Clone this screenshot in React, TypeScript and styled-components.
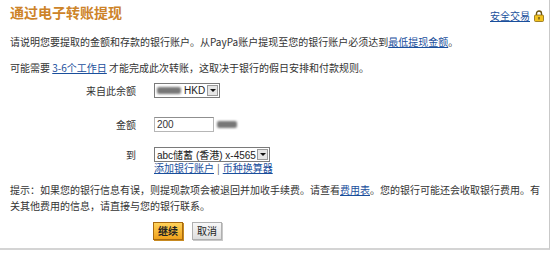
import styled, { createGlobalStyle } from "styled-components"

const GlobalStyle = createGlobalStyle`
  html, body {
    margin: 0;
    padding: 0;
    background: #ffffff;
  }
  body {
    font-family: "Noto Sans CJK SC", "Liberation Sans", sans-serif;
    font-size: 10px;
    color: #333333;
  }
`

const Panel = styled.div`
  width: 550px;
  height: 250px;
  border-right: 1px solid #c9c9c9;
  border-bottom: 2px solid #d4d4d4;
  box-sizing: border-box;
  padding: 3px 5px 0 10px;
`

const Header = styled.div`
  display: flex;
  align-items: flex-start;
  justify-content: space-between;
  height: 28px;
`

const Title = styled.h1`
  margin: 0;
  font-size: 14px;
  line-height: 18px;
  font-weight: 700;
  color: #cd8328;
  font-family: "Noto Sans CJK SC", sans-serif;
`

const Secure = styled.div`
  display: flex;
  align-items: center;
  gap: 4px;
  margin-top: 5px;
  line-height: 15px;
`

const Link = styled.a`
  color: #1a4f9c;
  text-decoration: underline;
  cursor: pointer;
`

const Para = styled.p<{ $mt: number; $lh?: number }>`
  margin: ${(p) => p.$mt}px 4px 0 0;
  line-height: ${(p) => p.$lh ?? 15}px;
  font-size: 10px;
`

const Form = styled.div`
  display: grid;
  grid-template-columns: 126px auto;
  column-gap: 18px;
  margin-top: 8px;
  align-items: start;
`

const Label = styled.div<{ $h: number }>`
  height: ${(p) => p.$h}px;
  line-height: 15px;
  text-align: right;
`

const Field = styled.div<{ $h: number }>`
  height: ${(p) => p.$h}px;
  display: flex;
  align-items: flex-start;
  gap: 3px;
`

const Select = styled.div<{ $w: number }>`
  width: ${(p) => p.$w}px;
  height: 15px;
  border: 1px solid #7a7a7a;
  box-sizing: border-box;
  display: flex;
  align-items: center;
  justify-content: space-between;
  padding-left: 2px;
  font-family: "Liberation Sans", "Noto Sans CJK SC", sans-serif;
  font-size: 10px;
  color: #222;
  background: #fff;
`

const Arrow = styled.span`
  width: 11px;
  height: 11px;
  margin-right: 1px;
  background: #e6e6e6;
  border: 1px solid #9a9a9a;
  box-sizing: border-box;
  display: flex;
  align-items: center;
  justify-content: center;
  &::after {
    content: "";
    border-left: 3px solid transparent;
    border-right: 3px solid transparent;
    border-top: 3px solid #111;
  }
`

const Value = styled.span`
  display: flex;
  align-items: center;
  gap: 3px;
`

const Blur = styled.span<{ $w: number }>`
  display: inline-block;
  width: ${(p) => p.$w}px;
  height: 7px;
  margin-top: 4px;
  background: #777;
  border-radius: 2px;
  filter: blur(1px);
`

const Input = styled.div`
  width: 60px;
  height: 15px;
  box-sizing: border-box;
  border: 1px solid #b6b6b6;
  border-top-color: #8f8f8f;
  padding-left: 2px;
  display: flex;
  align-items: center;
  font-family: "Liberation Sans", sans-serif;
  font-size: 10px;
`

const Links = styled.div`
  display: flex;
  gap: 3px;
  align-items: center;
  height: 12px;
  line-height: 12px;
  color: #555;
`

const Buttons = styled.div`
  display: flex;
  gap: 9px;
  margin: 8px 0 0 143px;
`

const Button = styled.button<{ $primary?: boolean }>`
  height: 18px;
  padding: 0 4px;
  font-family: "Noto Sans CJK SC", sans-serif;
  font-size: 10px;
  font-weight: ${(p) => (p.$primary ? 700 : 400)};
  color: #222;
  border: 1px solid ${(p) => (p.$primary ? "#a86a10" : "#b0b0b0")};
  background: ${(p) => (p.$primary ? "linear-gradient(#ffd25a, #f0a21c)" : "linear-gradient(#f8f8f8, #dedede)")};
  box-shadow: ${(p) => (p.$primary ? "1px 1px 0 #c88a20" : "1px 1px 0 #c8c8c8")};
  line-height: 16px;
`

function Lock() {
  return (
    <svg width="10" height="12" viewBox="0 0 10 12">
      <path d="M2.5 5V3.5a2.5 2.5 0 0 1 5 0V5" fill="none" stroke="#6b5410" strokeWidth="1.4" />
      <rect x="0.5" y="5" width="9" height="6.5" rx="1" fill="#f2c21e" stroke="#8a6a10" strokeWidth="0.8" />
      <rect x="4.3" y="7" width="1.4" height="2.5" fill="#6b5410" />
    </svg>
  )
}

export default function App() {
  return (
    <>
      <GlobalStyle />
      <Panel>
        <Header>
          <Title>通过电子转账提现</Title>
          <Secure>
            <Link>安全交易</Link>
            <Lock />
          </Secure>
        </Header>
        <Para $mt={3}>
          请说明您要提取的金额和存款的银行账户。从PayPa账户提现至您的银行账户必须达到<Link>最低提现金额</Link>。
        </Para>
        <Para $mt={11}>
          可能需要 <Link>3-6个工作日</Link> 才能完成此次转账，这取决于银行的假日安排和付款规则。
        </Para>
        <Form>
          <Label $h={34}>来自此余额</Label>
          <Field $h={34}>
            <Select $w={66}>
              <Value>
                <Blur $w={24} style={{ marginTop: 0 }} />
                HKD
              </Value>
              <Arrow />
            </Select>
          </Field>
          <Label $h={30}>金额</Label>
          <Field $h={30}>
            <Input>200</Input>
            <Blur $w={20} />
          </Field>
          <Label $h={15}>到</Label>
          <Field $h={15}>
            <Select $w={116}>
              <span>abc储蓄 (香港) x-4565</span>
              <Arrow />
            </Select>
          </Field>
          <div />
          <Links>
            <Link>添加银行账户</Link>|<Link>币种换算器</Link>
          </Links>
        </Form>
        <Para $mt={8} $lh={16}>
          提示：如果您的银行信息有误，则提现款项会被退回并加收手续费。请查看<Link>费用表</Link>。您的银行可能还会收取银行费用。有关其他费用的信息，请直接与您的银行联系。
        </Para>
        <Buttons>
          <Button $primary>继续</Button>
          <Button>取消</Button>
        </Buttons>
      </Panel>
    </>
  )
}
